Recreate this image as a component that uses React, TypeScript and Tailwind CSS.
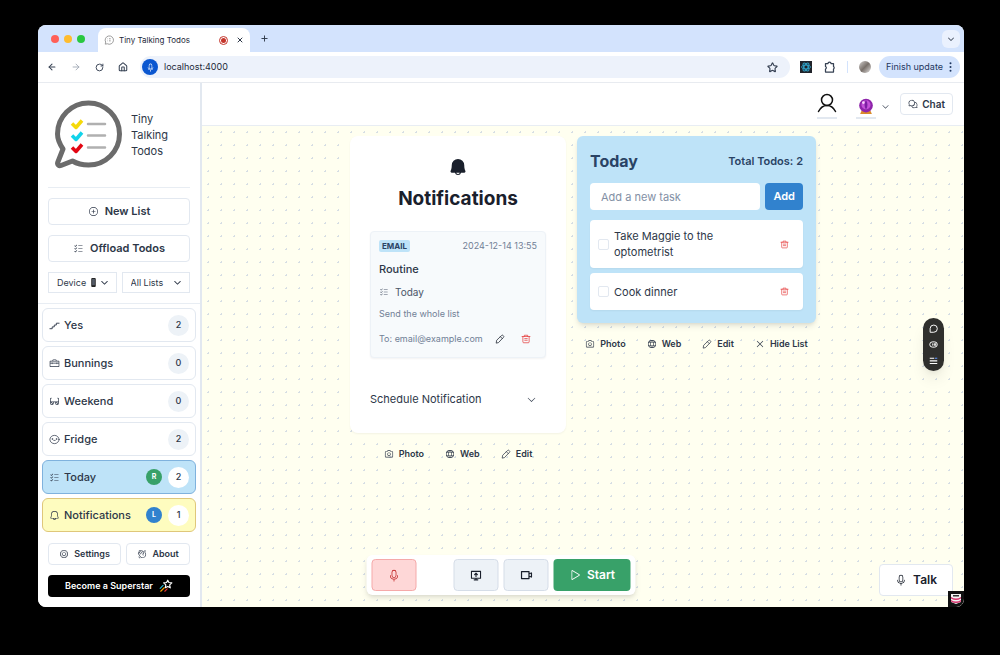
import { useState } from "react";
import type { ReactNode } from "react";
import clsx from "clsx";
import {
  PiBell,
  PiBellFill,
  PiCamera,
  PiCaretDown,
  PiCaretDownBold,
  PiChatsCircle,
  PiGear,
  PiGlobe,
  PiHandWaving,
  PiListChecks,
  PiMicrophone,
  PiPlay,
  PiPlusCircle,
  PiSunglasses,
  PiToolbox,
  PiX,
} from "react-icons/pi";
import { ArrowLeft, ArrowRight, House, Plus, RotateCw, Star, X } from "lucide-react";

interface TodoList {
  name: string;
  count: number;
  icon: ReactNode;
  color?: "blue" | "yellow";
  slot?: "R" | "L";
}

const lists: TodoList[] = [
  { name: "Yes", count: 2, icon: <StairsIcon /> },
  { name: "Bunnings", count: 0, icon: <PiToolbox /> },
  { name: "Weekend", count: 0, icon: <PiSunglasses /> },
  { name: "Fridge", count: 2, icon: <FaceIcon /> },
  { name: "Today", count: 2, icon: <PiListChecks />, color: "blue", slot: "R" },
  { name: "Notifications", count: 1, icon: <PiBell />, color: "yellow", slot: "L" },
];

function StairsIcon() {
  return (
    <svg viewBox="0 0 24 24" width="1em" height="1em" fill="none" stroke="currentColor" strokeWidth="2" strokeLinecap="round">
      <path d="M2 19h5v-4h4.500v-4H16V7h6" />
    </svg>
  );
}

function FaceIcon() {
  return (
    <svg viewBox="0 0 24 24" width="1em" height="1em" fill="none" stroke="currentColor" strokeWidth="1.6" strokeLinecap="round">
      <ellipse cx="12" cy="12" rx="10" ry="9" />
      <path d="M7.500 11h.1M16.500 11h.1" strokeWidth="3.500" />
      <path d="M10.500 14h3" />
    </svg>
  );
}

function TrashIcon() {
  return (
    <svg viewBox="0 0 24 24" width="1em" height="1em" fill="none" stroke="currentColor" strokeWidth="1.8" strokeLinecap="round" strokeLinejoin="round">
      <path d="M2.5 6h19M8 6V3h8v3M4.5 6v13a2 2 0 0 0 2 2h11a2 2 0 0 0 2-2V6M9 11h6M9 15h6" />
    </svg>
  );
}

function PencilIcon() {
  return (
    <svg viewBox="0 0 24 24" width="1em" height="1em" fill="none" stroke="currentColor" strokeWidth="1.8" strokeLinecap="round" strokeLinejoin="round">
      <path d="m3 21 1-6L16 3.5a2.4 2.4 0 0 1 3.4 0l1 1a2.4 2.4 0 0 1 0 3.4L9 20Zm10-14.500 4.500 4.500" />
    </svg>
  );
}

function PuzzleIcon() {
  return (
    <svg viewBox="0 0 24 24" className="size-3" fill="none" stroke="currentColor" strokeWidth="2.500" strokeLinejoin="round">
      <path d="M3 5h5a3 3 0 0 1 6 0h5v6a3 3 0 0 1 0 5v6H3v-6a2.700 2.700 0 0 0 0-5Z" />
    </svg>
  );
}

function ScreenShareIcon() {
  return (
    <svg viewBox="0 0 24 24" width="1em" height="1em" fill="none" stroke="currentColor" strokeWidth="2.500" strokeLinecap="round" strokeLinejoin="round">
      <path d="M2 3h20v15H2zM8 21.500h8M12 18v3M12 14V7M9 10l3-3 3 3" />
    </svg>
  );
}

function VideoIcon() {
  return (
    <svg viewBox="0 0 24 24" width="1em" height="1em" fill="none" stroke="currentColor" strokeWidth="2.500" strokeLinejoin="round">
      <path d="M2 5h15v14H2zM17 9.500l5-1.500v8l-5-1.500" />
    </svg>
  );
}

function Logo() {
  return (
    <svg viewBox="0 0 68 70" className="h-[70px] w-[68px] shrink-0" fill="none" strokeLinecap="round" strokeLinejoin="round">
      <path d="M8 49C4 43 2.500 39 2.500 34a31 31 0 1 1 31 31c-6 0-11-1-16-4L6 65.500c-2 .8-4-.8-3.300-3Z" stroke="#6b6b6b" strokeWidth="5" />
      <path d="M33 24h17M33 35.500h17M33 47.500h17" stroke="#b0b0b0" strokeWidth="2.500" />
      <path d="m17 23.500 4 4 6-7" stroke="#f5d90a" strokeWidth="3.500" strokeLinecap="butt" />
      <path d="m17 35.500 4 4 6-7" stroke="#12d3ea" strokeWidth="3.500" strokeLinecap="butt" />
      <path d="m17 47.500 4 4 6-7" stroke="#e30613" strokeWidth="3.500" strokeLinecap="butt" />
    </svg>
  );
}

function CrystalBall() {
  return (
    <svg viewBox="0 0 24 26" className="h-[17px] w-4">
      <path d="M5 20h14l2 4.500H3Z" fill="#d98a2b" />
      <circle cx="12" cy="11.500" r="10.500" fill="#8e24aa" />
      <circle cx="12" cy="10.500" r="7" fill="#c452d9" />
      <path d="M12 3c-3 4-3 10 0 15 3-5 3-11 0-15Z" fill="#7b1fa2" />
      <circle cx="8" cy="7" r="2" fill="#f6d5fb" />
    </svg>
  );
}

function ShootingStar() {
  return (
    <svg viewBox="0 0 24 24" className="size-3.5" fill="none" strokeWidth="2" strokeLinecap="round" strokeLinejoin="round">
      <path d="m15 2 2 4 5 .7-3.700 3.400 1 5L15 12.800 10.700 15l1-5L8 6.700 13 6Z" stroke="#fff" />
      <path d="m7 11-5 5" stroke="#22b8cf" />
      <path d="m9 15-6 6" stroke="#f59f00" />
      <path d="m14 17-4 4" stroke="#e03131" />
    </svg>
  );
}

function BrowserBar() {
  return (
    <div className="border-b border-[#e8ebf0] bg-[#d3e3fd]">
      <div className="flex h-[27px] items-end">
        <div className="flex w-15 items-center gap-[5px] self-center pl-[13px]">
          <span className="size-2 rounded-full bg-[#ff5f57]" />
          <span className="size-2 rounded-full bg-[#febc2e]" />
          <span className="size-2 rounded-full bg-[#28c840]" />
        </div>
        <div className="flex h-6 w-[152px] items-center rounded-t-lg bg-white px-1.5">
          <svg viewBox="0 0 24 24" className="size-2.5" fill="none" stroke="#8a8a8a" strokeWidth="2">
            <path d="M4 17a10 10 0 1 1 4 4l-5 1Z" />
            <path d="M8 9h1M8 14h1M12 9h4M12 14h4" />
          </svg>
          <span className="ml-[5px] text-[8px] whitespace-nowrap text-gray-800">Tiny Talking Todos</span>
          <span className="ml-auto flex size-[9px] items-center justify-center rounded-full border border-[#c5352b]">
            <span className="size-[5px] rounded-full bg-[#c5352b]" />
          </span>
          <button aria-label="Close tab" className="ml-2"><X size={8} strokeWidth={3} /></button>
        </div>
        <button aria-label="New tab" className="ml-2.5 self-center"><Plus size={9} strokeWidth={2.5} /></button>
        <button aria-label="Search tabs" className="mr-1 ml-auto flex size-[18px] items-center justify-center self-center rounded-md bg-[#eaf1fe] text-[8px]">
          <PiCaretDownBold />
        </button>
      </div>
      <div className="flex h-[30px] items-center gap-3.5 bg-white pr-1 pl-[9px] text-gray-700">
        <button aria-label="Back"><ArrowLeft size={10} strokeWidth={2.5} /></button>
        <button aria-label="Forward" className="text-gray-400"><ArrowRight size={10} /></button>
        <button aria-label="Reload"><RotateCw size={9} strokeWidth={2.5} /></button>
        <button aria-label="Home"><House size={10} strokeWidth={2.5} /></button>
        <label className="-ml-0.5 flex h-[22px] flex-1 items-center rounded-full bg-[#edf2fb] pr-3 pl-0.5">
          <span className="flex size-4 items-center justify-center rounded-full bg-[#0b57d0] text-[9px] text-white">
            <PiMicrophone />
          </span>
          <input aria-label="Address" defaultValue="localhost:4000" className="ml-1.5 min-w-0 flex-1 bg-transparent text-[9px] text-gray-800 outline-none" />
          <Star size={11} strokeWidth={2.5} />
        </label>
        <svg viewBox="0 0 12 12" className="-ml-1 size-3">
          <rect width="12" height="12" fill="#20232a" />
          <g fill="none" stroke="#2f9fc4">
            <ellipse cx="6" cy="6" rx="4.500" ry="2" />
            <ellipse cx="6" cy="6" rx="4.500" ry="2" transform="rotate(60 6 6)" />
            <ellipse cx="6" cy="6" rx="4.500" ry="2" transform="rotate(120 6 6)" />
          </g>
        </svg>
        <button aria-label="Extensions" className="-ml-0.5"><PuzzleIcon /></button>
        <span className="-mx-[3px] h-3 w-px bg-[#d3e3fd]" />
        <span className="size-3 rounded-full bg-linear-to-br from-stone-300 via-stone-500 to-stone-200" />
        <button className="-ml-1.5 flex h-[22px] items-center gap-1.5 rounded-full bg-[#d3e3fd] pr-2 pl-[7px] text-[9px] whitespace-nowrap text-[#1f3760]">
          Finish update
          <svg viewBox="0 0 3 12" className="h-2.5 w-[3px]" fill="currentColor">
            <circle cx="1.500" cy="1.500" r="1.200" />
            <circle cx="1.500" cy="6" r="1.200" />
            <circle cx="1.500" cy="10.500" r="1.200" />
          </svg>
        </button>
      </div>
    </div>
  );
}

function ListRow({ list }: { list: TodoList }) {
  return (
    <button
      className={clsx(
        "flex h-[34px] items-center rounded-md border px-1.5 text-left",
        list.color === "blue" && "border-[#7fb2dd] bg-[#bee3f8]",
        list.color === "yellow" && "border-[#dfc77a] bg-[#fefcbf]",
        !list.color && "border-[#e2e8f0] bg-white",
      )}
    >
      <span className="mr-1 text-[11px]">{list.icon}</span>
      <span className="flex-1 text-[11px] font-medium">{list.name}</span>
      {list.slot && (
        <span
          className={clsx(
            "mr-1.5 flex size-4 items-center justify-center rounded-full text-[7px] font-bold text-white",
            list.slot === "R" ? "bg-[#38a169]" : "bg-[#3182ce]",
          )}
        >
          {list.slot}
        </span>
      )}
      <span
        className={clsx(
          "flex size-[21px] items-center justify-center rounded-full text-[9px] font-medium",
          list.color ? "bg-white" : "bg-[#edf2f7]",
        )}
      >
        {list.count}
      </span>
    </button>
  );
}

function Sidebar() {
  const outline = "flex items-center justify-center rounded border border-[#e2e8f0] bg-white font-semibold";
  return (
    <aside className="flex w-[164px] shrink-0 flex-col border-r-2 border-[#e2e8f0] bg-white">
      <div className="mx-2.5 flex items-center gap-2 border-b border-[#e8edf3] pt-[17px] pb-[17px] pl-[7px]">
        <Logo />
        <h1 className="text-[11px] leading-4">
          Tiny
          <br />
          Talking
          <br />
          Todos
        </h1>
      </div>
      <div className="flex flex-col gap-2.5 border-b border-[#e8edf3] px-2.5 py-2.5">
        <button className={clsx(outline, "h-[27px] gap-1.5 text-[11px]")}>
          <PiPlusCircle /> New List
        </button>
        <button className={clsx(outline, "h-[27px] gap-1.5 text-[11px]")}>
          <PiListChecks /> Offload Todos
        </button>
        <div className="flex gap-[5px] text-[9px]">
          <div className="relative flex-1">
            <select aria-label="Storage" className="h-[21px] w-full appearance-none border border-[#e2e8f0] bg-white pl-2 outline-none">
              <option>Device</option>
            </select>
            <svg viewBox="0 0 5 10" className="pointer-events-none absolute top-1.5 right-[21px] h-[9px] w-[5px]">
              <rect width="5" height="10" rx="1" fill="#222" />
              <rect x="1" y="1" width="3" height="7" fill="#555c68" />
            </svg>
            <PiCaretDownBold className="pointer-events-none absolute top-1.5 right-2" />
          </div>
          <div className="relative flex-1">
            <select aria-label="Lists shown" className="h-[21px] w-full appearance-none border border-[#e2e8f0] bg-white pl-2 outline-none">
              <option>All Lists</option>
            </select>
            <PiCaretDownBold className="pointer-events-none absolute top-1.5 right-2" />
          </div>
        </div>
      </div>
      <nav className="flex flex-col gap-1 p-1">
        {lists.map((list) => (
          <ListRow key={list.name} list={list} />
        ))}
      </nav>
      <div className="mt-auto flex flex-col gap-2.5 px-2.5 pt-1.5 pb-2.5">
        <div className="flex gap-[5px] text-[9px]">
          <button className={clsx(outline, "h-[22px] flex-auto gap-[5px]")}><PiGear className="text-[10px]" /> Settings</button>
          <button className={clsx(outline, "h-[22px] flex-auto gap-[5px]")}><PiHandWaving className="text-[10px]" /> About</button>
        </div>
        <button className="flex h-[22px] items-center justify-center gap-1.5 rounded bg-black text-[9px] font-semibold text-white">
          Become a Superstar <ShootingStar />
        </button>
      </div>
    </aside>
  );
}

function Header() {
  return (
    <header className="flex h-[43px] items-center justify-end border-b border-[#e8edf3] bg-white pr-[11px]">
      <button aria-label="Account" className="mr-[19px] border-b-2 border-[#e2e8f0] pt-1 pb-1">
        <svg viewBox="0 0 20 20" className="size-5" fill="none" stroke="#111" strokeWidth="1.500" strokeLinecap="round">
          <circle cx="10" cy="7" r="5.500" />
          <path d="M1.500 18.500C3.500 14.500 6.500 12.500 10 12.500s6.500 2 8.500 6" />
        </svg>
      </button>
      <button aria-label="Theme" className="mr-2.5 flex items-center gap-[5px] text-[9px]">
        <span className="border-b-2 border-[#e2e8f0] px-0.5 pt-2 pb-0.5"><CrystalBall /></span>
        <PiCaretDown className="mt-1" />
      </button>
      <button className="flex h-[22px] items-center gap-1 rounded border border-[#e2e8f0] px-[7px] text-[10px] font-semibold">
        <PiChatsCircle /> Chat
      </button>
    </header>
  );
}

function CardActions({ hide }: { hide?: boolean }) {
  const item = "flex items-center gap-[5px]";
  return (
    <div className="mt-[13px] flex items-center justify-center gap-[21px] text-[9px] leading-4 font-semibold">
      <button className={item}><PiCamera className="text-[10px]" /> Photo</button>
      <button className={item}><PiGlobe className="text-[10px]" /> Web</button>
      <button className={item}><span className="text-[10px]"><PencilIcon /></span> Edit</button>
      {hide && <button className={item}><PiX className="text-[10px]" /> Hide List</button>}
    </div>
  );
}

function NotificationsCard() {
  return (
    <section className="w-[216px]">
      <div className="rounded-lg bg-white px-5 pt-[21px] pb-[26px] shadow-xs">
        <PiBellFill className="mx-auto text-[20px] text-[#1a202c]" />
        <h2 className="mt-2 text-center text-[19px] leading-7 font-bold text-[#1a202c]">Notifications</h2>
        <article className="mt-[18px] rounded border border-[#edf2f7] bg-[#f7fafc] px-2 pt-1.5 pb-2.5 text-[9px] leading-4 text-[#718096] shadow-xs">
          <div className="flex items-center justify-between">
            <span className="rounded-xs bg-[#bee3f8] px-[3px] text-[8px] leading-3 font-bold text-[#2a4365]">EMAIL</span>
            <time>2024-12-14 13:55</time>
          </div>
          <h3 className="mt-[7px] text-[11px] font-medium text-[#2d3748]">Routine</h3>
          <p className="mt-[7px] flex items-center gap-1.5 text-[10px] text-[#4a5568]"><PiListChecks /> Today</p>
          <p className="mt-1.5">Send the whole list</p>
          <div className="mt-[9px] flex items-center">
            <span className="flex-1 whitespace-nowrap">To: email@example.com</span>
            <button aria-label="Edit notification" className="mr-4 text-[10px] text-[#1a202c]"><PencilIcon /></button>
            <button aria-label="Delete notification" className="mr-1.5 text-[10px] text-[#e53e3e]"><TrashIcon /></button>
          </div>
        </article>
        <button className="mt-[33px] flex w-full items-center justify-between pr-[9px] text-[11px] leading-4">
          Schedule Notification <PiCaretDown />
        </button>
      </div>
      <CardActions />
    </section>
  );
}

function TodayCard() {
  const [todos, setTodos] = useState(["Take Maggie to the optometrist", "Cook dinner"]);
  const [task, setTask] = useState("");

  const addTask = (e: React.FormEvent) => {
    e.preventDefault();
    if (!task.trim()) return;
    setTodos([...todos, task.trim()]);
    setTask("");
  };

  return (
    <section className="w-[239px]">
      <div className="rounded-md bg-[#bee3f8] px-[13px] pt-3 pb-[13px] shadow-md">
        <div className="flex items-center justify-between text-[#2a4365]">
          <h2 className="text-base leading-[26px] font-bold">Today</h2>
          <span className="text-[11px] font-semibold">Total Todos: {todos.length}</span>
        </div>
        <form onSubmit={addTask} className="mt-[9px] flex gap-[5px]">
          <input
            aria-label="Add a new task"
            placeholder="Add a new task"
            value={task}
            onChange={(e) => setTask(e.target.value)}
            className="h-[27px] min-w-0 flex-1 rounded bg-white px-[11px] text-[11px] outline-none placeholder:text-[#8390a5]"
          />
          <button className="h-[27px] rounded bg-[#3182ce] px-2 text-[11px] font-semibold text-white">Add</button>
        </form>
        <ul className="mt-2.5 flex flex-col gap-[5px]">
          {todos.map((todo) => (
            <li key={todo} className="flex items-center rounded bg-white px-2 py-2 shadow-xs">
              <label className="flex min-h-[21px] flex-1 items-center gap-[5px] pr-10 text-[11px] leading-4">
                <input type="checkbox" className="size-[11px] shrink-0 appearance-none rounded-xs border border-[#e2e8f0] checked:bg-[#3182ce]" />
                {todo}
              </label>
              <button
                aria-label={`Delete ${todo}`}
                onClick={() => setTodos(todos.filter((t) => t !== todo))}
                className="mr-1.5 text-[9px] text-[#e53e3e]"
              >
                <TrashIcon />
              </button>
            </li>
          ))}
        </ul>
      </div>
      <CardActions hide />
    </section>
  );
}

function CallBar() {
  return (
    <div className="absolute bottom-3 left-1/2 flex -translate-x-1/2 gap-[5px] rounded-md bg-white px-[5px] py-1 shadow-md">
      <button aria-label="Mute" className="flex h-8 w-[45px] items-center justify-center rounded border border-[#f5a9a9] bg-[#fed7d7] text-[13px] text-[#c53030]">
        <PiMicrophone />
      </button>
      <span className="w-[27px]" />
      <button aria-label="Share screen" className="flex h-8 w-[45px] items-center justify-center rounded border border-[#d5dde8] bg-[#edf2f7] text-[11px] text-[#1a202c]">
        <ScreenShareIcon />
      </button>
      <button aria-label="Camera" className="flex h-8 w-[45px] items-center justify-center rounded border border-[#d5dde8] bg-[#edf2f7] text-xs text-[#1a202c]">
        <VideoIcon />
      </button>
      <button className="flex h-8 w-[77px] items-center justify-center gap-1.5 rounded bg-[#38a169] text-xs font-semibold text-white">
        <PiPlay /> Start
      </button>
    </div>
  );
}

export default function App() {
  return (
    <div className="flex min-h-screen flex-col bg-black pt-[25px] pr-9 pb-12 pl-[38px] font-['Inter',sans-serif] text-[#2d3748]">
      <div className="relative flex flex-1 flex-col overflow-hidden rounded-lg bg-white">
        <BrowserBar />
        <div className="flex flex-1">
          <Sidebar />
          <div className="flex min-w-0 flex-1 flex-col">
            <Header />
            <main className="flex flex-1 items-start justify-center gap-[11px] bg-[#fffff0] bg-[radial-gradient(#d6dee4_1px,transparent_1px)] bg-size-[13px_13px] pt-2.5">
              <NotificationsCard />
              <TodayCard />
            </main>
          </div>
        </div>
        <CallBar />
        <div className="absolute top-[293px] right-5 flex h-[53px] w-[21px] flex-col items-center justify-between rounded-full bg-[#2f2f2d] py-1.5 text-white shadow-lg">
          <svg viewBox="0 0 12 12" className="size-[9px]" fill="none" stroke="currentColor" strokeWidth="1.300">
            <path d="M1.500 11V6a4.800 4.800 0 1 1 4.800 5Z" />
          </svg>
          <svg viewBox="0 0 12 12" className="size-[9px]" fill="none" stroke="currentColor" strokeWidth="1.300">
            <rect x="1" y="2.500" width="10" height="7" rx="3.500" />
            <path d="M5 4.500v3M7 5h2v2H7Z" />
          </svg>
          <svg viewBox="0 0 12 12" className="size-[9px]" fill="none" stroke="currentColor" strokeWidth="1.500">
            <path d="M1 3h6M1 6.500h10M1 10h10" />
            <path d="M8 3h3" stroke="#5b8def" />
          </svg>
        </div>
        <button className="absolute right-[11px] bottom-[11px] flex h-8 items-center gap-1.5 rounded border border-[#e2e8f0] bg-white px-[15px] text-xs font-semibold text-[#1a202c]">
          <PiMicrophone /> Talk
        </button>
        <div className="absolute right-0 bottom-0 flex size-4 items-center justify-center bg-[#111]">
          <svg viewBox="0 0 10 10" className="size-2.5">
            <path d="M0 0h10v8l-5 2-5-2Z" fill="#f4f4f4" />
            <path d="M0 3q5 3 10 0v1.500q-5 3-10 0ZM0 6q5 3 10 0v1.500q-5 3-10 0Z" fill="#d6336c" />
            <path d="M2 1h6v1.500H2Z" fill="#333" />
          </svg>
        </div>
      </div>
    </div>
  );
}
